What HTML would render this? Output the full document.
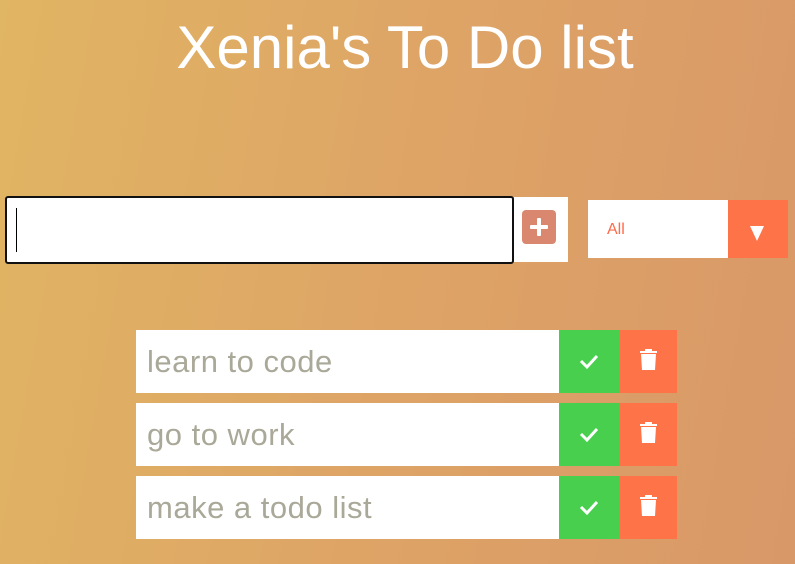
<!DOCTYPE html>
<html><head><style>
html,body{margin:0;padding:0}
body{width:795px;height:564px;overflow:hidden;position:relative;background:linear-gradient(100deg,#e0b563 0%,#dea466 50%,#d99868 100%);font-family:"Liberation Sans",sans-serif}
h1{position:absolute;left:0;width:810px;top:13px;margin:0;text-align:center;color:#fff;font-weight:normal;font-size:60px;line-height:70px}
.inp{position:absolute;left:5px;top:196px;width:505px;height:64px;background:#fff;border:2px solid #111;border-radius:3px}
.caret{position:absolute;left:16px;top:208px;width:1px;height:44px;background:#000}
.ext{position:absolute;left:514px;top:197px;width:54px;height:65px;background:#fff}
.plus{position:absolute;left:522px;top:210px;width:34px;height:34px;background:#d9876f;border-radius:4px}
.plus:before{content:"";position:absolute;left:8px;top:15px;width:18px;height:4px;background:#fff;border-radius:1px}
.plus:after{content:"";position:absolute;left:15px;top:8px;width:4px;height:18px;background:#fff;border-radius:1px}
.sel{position:absolute;left:588px;top:200px;width:140px;height:58px;background:#fff;color:#ff6a4a;font-size:16px;line-height:60px;padding-left:19px;box-sizing:border-box}
.arr{position:absolute;left:728px;top:200px;width:60px;height:58px;background:#ff7348}
.arr:after{content:"";position:absolute;left:22px;top:26px;border-left:7px solid transparent;border-right:7px solid transparent;border-top:15px solid #fff}
.row{position:absolute;left:136px;width:541px;height:63px}
.txt{position:absolute;left:0;top:0;width:423px;height:63px;background:#fff;color:#aaa898;font-size:31px;line-height:63px;padding-left:11px;box-sizing:border-box;font-weight:normal;letter-spacing:0.5px}
.ok{position:absolute;left:423px;top:0;width:61px;height:63px;background:#48cf4e}
.del{position:absolute;left:484px;top:0;width:57px;height:63px;background:#ff7348}
</style></head><body>
<h1>Xenia's To Do list</h1>
<div class="inp"></div><div class="caret"></div>
<div class="ext"></div><div class="plus"></div>
<div class="sel">All</div><div class="arr"></div>

<div class="row" style="top:330px"><div class="txt">learn to code</div><div class="ok"><svg width="61" height="63"><path d="M22 31 L28 37 L38 26" stroke="#fff" stroke-width="3" fill="none"/></svg></div><div class="del"><svg width="57" height="63"><rect x="20" y="21" width="17" height="2" fill="#fff"/><rect x="25" y="19" width="7" height="3" fill="#fff"/><path d="M21 24 H36 L35 40 H22 Z" fill="#fff"/></svg></div></div>
<div class="row" style="top:403px"><div class="txt">go to work</div><div class="ok"><svg width="61" height="63"><path d="M22 31 L28 37 L38 26" stroke="#fff" stroke-width="3" fill="none"/></svg></div><div class="del"><svg width="57" height="63"><rect x="20" y="21" width="17" height="2" fill="#fff"/><rect x="25" y="19" width="7" height="3" fill="#fff"/><path d="M21 24 H36 L35 40 H22 Z" fill="#fff"/></svg></div></div>
<div class="row" style="top:476px"><div class="txt">make a todo list</div><div class="ok"><svg width="61" height="63"><path d="M22 31 L28 37 L38 26" stroke="#fff" stroke-width="3" fill="none"/></svg></div><div class="del"><svg width="57" height="63"><rect x="20" y="21" width="17" height="2" fill="#fff"/><rect x="25" y="19" width="7" height="3" fill="#fff"/><path d="M21 24 H36 L35 40 H22 Z" fill="#fff"/></svg></div></div>
</body></html>
